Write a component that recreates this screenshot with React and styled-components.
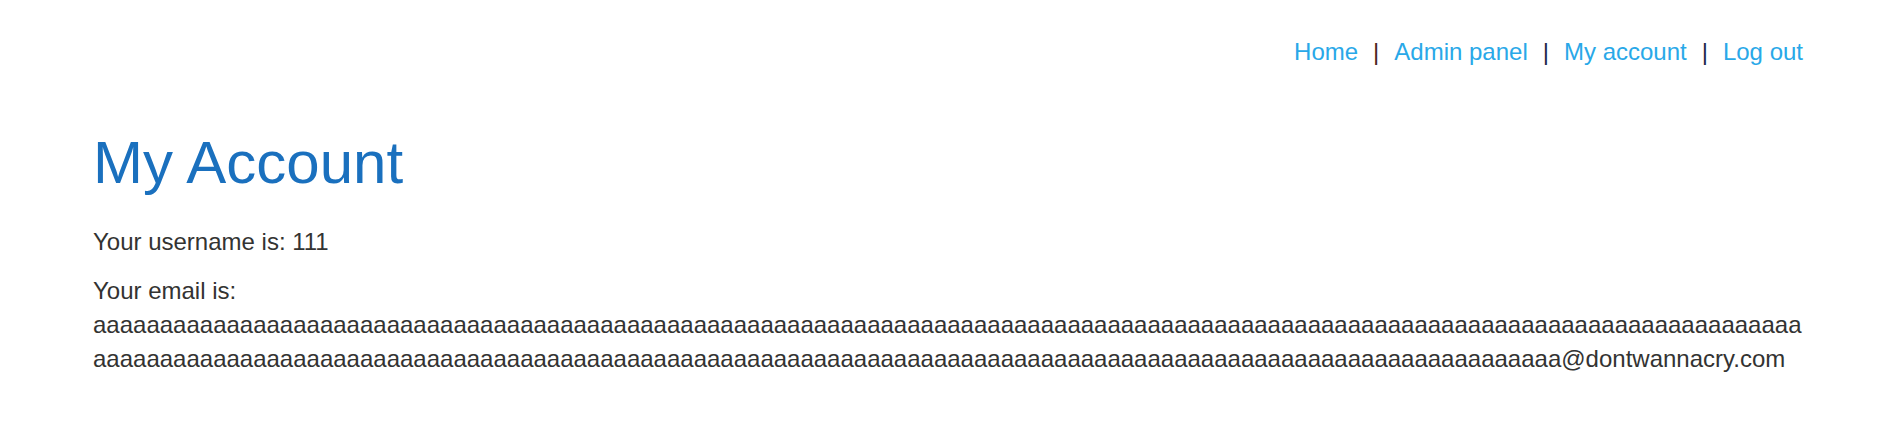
import React from "react";
import styled, { createGlobalStyle } from "styled-components";

const GlobalStyle = createGlobalStyle`
  * { box-sizing: border-box; }
  body {
    margin: 0;
    background: #ffffff;
    color: #333332;
    font-family: "Liberation Sans", Arial, sans-serif;
    font-size: 24px;
    line-height: 34px;
  }
`;

const Page = styled.div`
  padding: 35px 82px 48px 93px;
`;

const Nav = styled.nav`
  display: flex;
  justify-content: flex-end;
  gap: 15px;
`;

const NavLink = styled.a`
  color: #29a8e8;
  text-decoration: none;
`;

const Divider = styled.span`
  color: ${(p) => p.$color};
`;

const Title = styled.h1`
  margin: 59px 0 27px;
  color: #1a70be;
  font-size: 60px;
  font-weight: 400;
  line-height: 70px;
`;

const Line = styled.p`
  margin: 0 0 15px;
  overflow-wrap: break-word;
`;

const links = ["Home", "Admin panel", "My account", "Log out"];
const dividers = ["#4a2220", "#1f2a4a", "#1f2a4a"];
const email = "a".repeat(238) + "@dontwannacry.com";

export default function App() {
  return (
    <>
      <GlobalStyle />
      <Page>
        <Nav>
          {links.map((label, i) => (
            <React.Fragment key={label}>
              {i > 0 && <Divider $color={dividers[i - 1]}>|</Divider>}
              <NavLink href="#">{label}</NavLink>
            </React.Fragment>
          ))}
        </Nav>
        <main>
          <Title>My Account</Title>
          <Line>Your username is: 111</Line>
          <Line>Your email is: {email}</Line>
        </main>
      </Page>
    </>
  );
}
